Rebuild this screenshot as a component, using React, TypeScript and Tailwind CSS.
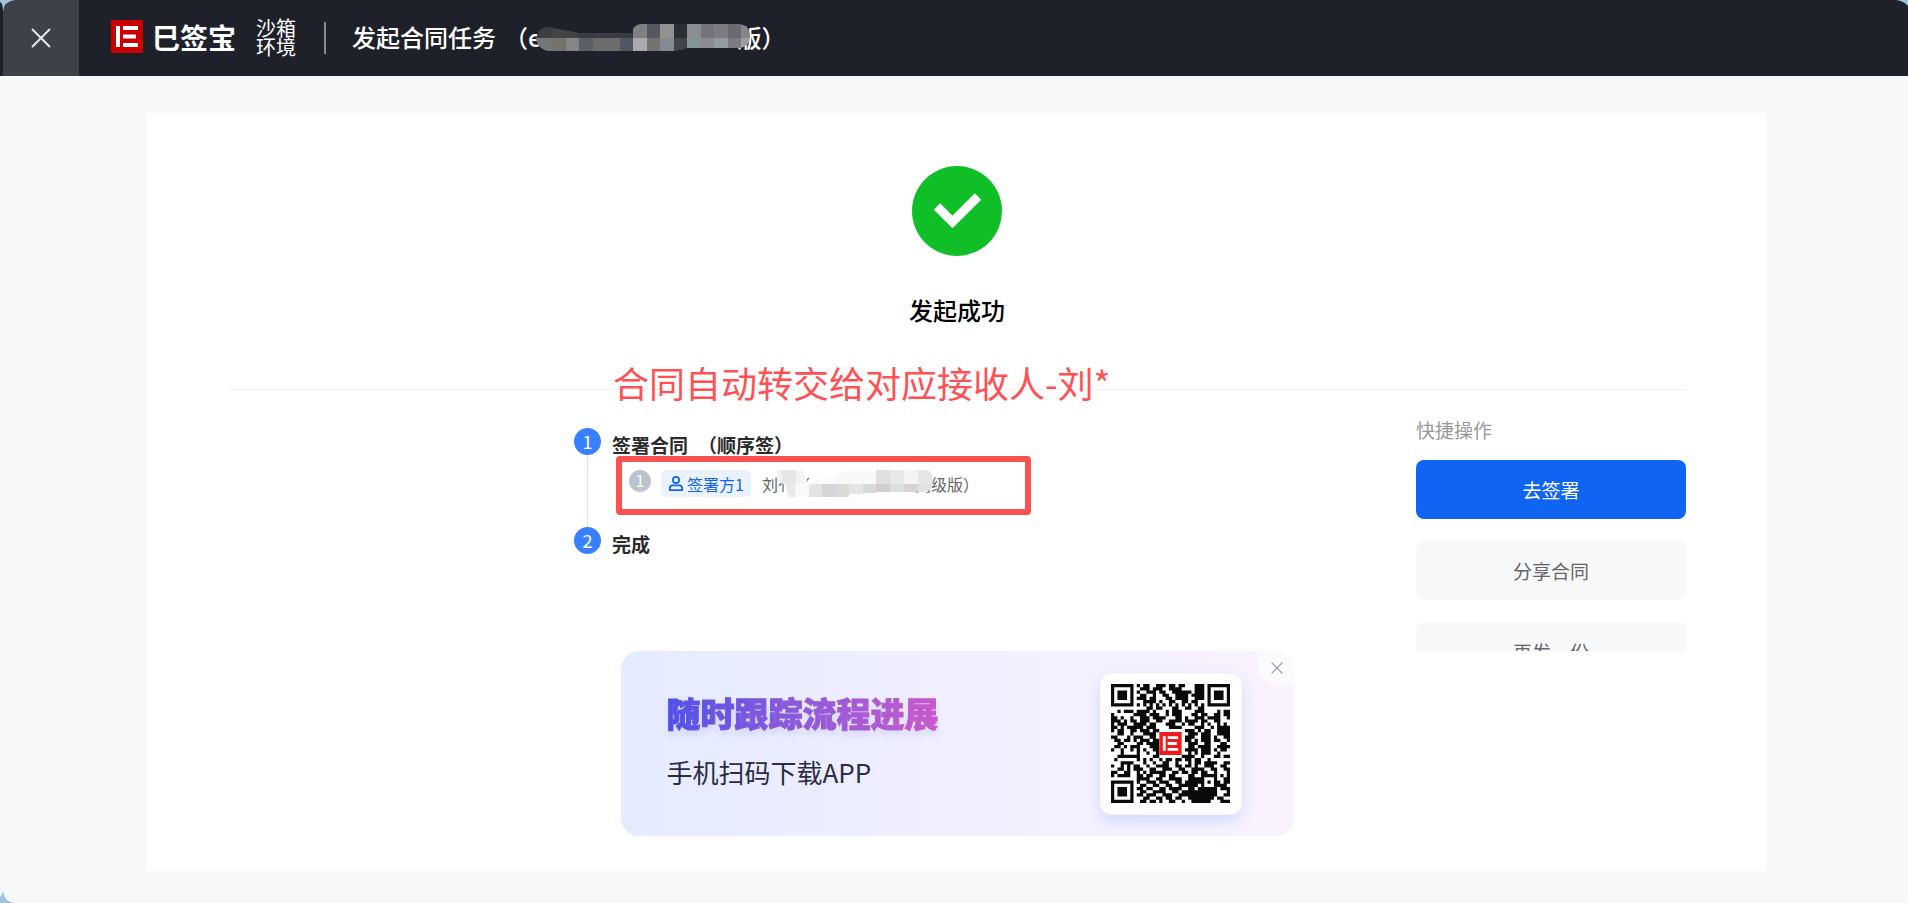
import { useState } from "react";

const QR_ROWS = [
  "#######.#.##..###.##.##...###.#######",
  "#.....#..###.###..####....###.#.....#",
  "#.###.#.#..###.##..######.###.#.###.#",
  "#.###.#..##..#..##..####.####.#.###.#",
  "#.###.#.###.##...##.####..###.#.###.#",
  "#.....#...####.#..##..##.##...#.....#",
  "#######.#.#.#.#.#.#.#.#.#.#.#.#######",
  "...........##.##...##..##..##........",
  "..#.###.####.#...#.###....###....#.##",
  "#......####.###..#.###...##.##..##.##",
  "##.#..#..###.####...##.#..###.####..#",
  "###.#.##.###..##..####.####.##..##...",
  "#.###..####.##...###..#.##..#.#..#.#.",
  "##.#.#####.###....####....###..#.####",
  "#.##..##.###.##........###.#.##..####",
  "..##..#...####..........###.###..####",
  "##...#.###..##.........###..###.#..##",
  ".##.##.#.###.##........##.#.###.##..#",
  "..##....##.####.........###..##...##.",
  ".##.#.###...###.........##.####..####",
  "#..#..#.#.#..##........####.###.#.##.",
  "...#....#..#..#.........#.#.###..#...",
  "..#######....##.......####..#...##.##",
  ".#......#.#.#..#.##.##.##.##..#......",
  "...####...#..#..##..#...#.##.####..##",
  "#..#.#.##..#..####..##.##.#..###..##.",
  "..##.#.###..##..###..##..####..##..##",
  "##..##..#.#.#####..##.##.##.##..#...#",
  "#.####..##.##..##.##....##..#####.#.#",
  "........####..##..####..#####...#..##",
  "#######.#..###.###..##.######.#.##.##",
  "#.....#..##..##..##..######.#...####.",
  "#.###.#.##.##..##.####..##.######.###",
  "#.###.#..##..####..##.###########...#",
  "#.###.#.##.###..###..############..##",
  "#.....#...##..##.##.##..########.##..",
  "#######..##.##.#..##..#..######...###",
];

const qrPath = QR_ROWS.map((row, y) =>
  row.replace(/./g, (c, x) => (c === "#" ? `M${x} ${y}h1v1h-1z` : "")),
).join("");

function BrandMark({ color, className }: { color: string; className?: string }) {
  return (
    <svg viewBox="0 0 32 33" className={className} aria-hidden="true">
      <path fill={color} d="M0 0h32v33H0z" />
      <path fill="#fff" d="M5 6h4v21H5zM12 6h15v4H12zM12 14.500h13v4H12zM12 23h15v4H12z" />
    </svg>
  );
}

function Cross({ className, width = 1 }: { className?: string; width?: number }) {
  return (
    <svg viewBox="0 0 20 20" className={className} fill="none" stroke="currentColor" strokeWidth={width} aria-hidden="true">
      <path d="M1 1l18 18M19 1L1 19" />
    </svg>
  );
}

function QrCode() {
  return (
    <div className="relative grid place-items-center">
      <svg viewBox="0 0 37 37" className="size-[119px]" role="img" aria-label="APP">
        <path d={qrPath} fill="#0a0a0a" />
      </svg>
      <BrandMark color="#ee1c1c" className="absolute size-[23px]" />
    </div>
  );
}

type Block = [x: number, y: number, w: number, h: number, fill: string];

const TITLE_BLOCKS: Block[] = [
  [0, 0, 16, 14, "#3d3f43"],
  [0, 14, 16, 13, "#737778"],
  [16, 0, 27, 14, "#414347"],
  [16, 14, 14, 13, "#76736f"],
  [30, 14, 13, 13, "#858588"],
  [43, 9, 54, 5, "#3a3c41"],
  [43, 14, 14, 13, "#5a5f69"],
  [57, 14, 27, 13, "#6d6d6c"],
  [84, 14, 13, 13, "#525763"],
  [97, 0, 14, 14, "#7e8082"],
  [111, 0, 13, 14, "#57585f"],
  [124, 0, 14, 14, "#929292"],
  [97, 14, 14, 13, "#a9aaac"],
  [111, 14, 13, 13, "#75726f"],
  [124, 14, 14, 13, "#858991"],
  [138, 0, 13, 14, "#2c2e35"],
  [138, 14, 13, 13, "#434447"],
  [151, 0, 14, 14, "#8b8d91"],
  [165, 0, 13, 14, "#747579"],
  [178, 0, 14, 14, "#7b7b81"],
  [192, 0, 13, 14, "#6a6a72"],
  [205, 0, 9, 14, "#858584"],
  [151, 14, 14, 10, "#859297"],
  [165, 14, 13, 10, "#8c8c90"],
  [178, 14, 14, 10, "#939aa0"],
  [192, 14, 13, 10, "#7d7b82"],
  [205, 14, 9, 10, "#999e9f"],
];

const SIGNER_BLOCKS: Block[] = [
  [0, 0, 5, 14, "#eef0f1"],
  [5, 0, 14, 14, "#e5e7e7"],
  [19, 0, 13, 14, "#f4f4f4"],
  [32, 7, 27, 7, "#fafafa"],
  [59, 1, 40, 13, "#f8f8f8"],
  [99, 0, 14, 14, "#e0dfde"],
  [113, 0, 14, 14, "#e8e8e9"],
  [127, 0, 14, 14, "#f3f4f5"],
  [141, 0, 15, 14, "#e4e6e6"],
  [9, 14, 9, 13, "#e8eaea"],
  [18, 14, 14, 13, "#f9f9f9"],
  [32, 14, 13, 13, "#e3e4e4"],
  [45, 14, 14, 13, "#d5d6d9"],
  [59, 14, 13, 13, "#dcdad7"],
  [72, 14, 14, 10, "#e5e5e5"],
  [86, 14, 13, 9, "#dad9d9"],
  [99, 14, 14, 8, "#d3cecd"],
  [113, 14, 14, 8, "#dedfe1"],
  [127, 14, 14, 8, "#d6d3d2"],
  [141, 14, 15, 8, "#e1e2e2"],
];

// Privacy mask: coloured blocks clipped to the brush stroke that painted them.
function Mosaic({ id, width, blocks, outline, className }: {
  id: string;
  width: number;
  blocks: Block[];
  outline: string;
  className: string;
}) {
  return (
    <svg width={width} height={27} className={className} shapeRendering="crispEdges" aria-hidden="true">
      <clipPath id={id}>
        <path d={outline} />
      </clipPath>
      <g clipPath={`url(#${id})`}>
        {blocks.map(([x, y, w, h, fill]) => (
          <rect key={`${x}-${y}`} x={x} y={y} width={w} height={h} fill={fill} />
        ))}
      </g>
    </svg>
  );
}

function Header() {
  return (
    <header className="flex h-[76px] bg-[#1e2129] pl-[3px] text-white">
      <button aria-label="关闭" className="grid h-full w-[76px] shrink-0 place-items-center rounded-tl-xl bg-[#3e4148] text-[#e8e8e8]">
        <Cross className="size-5" width={2} />
      </button>
      <div className="flex items-center pb-[3px] pl-8">
        <BrandMark color="#cc0000" className="h-[33px] w-8 shrink-0" />
        <span className="ml-[9px] whitespace-nowrap text-[28px] font-bold leading-9">巳签宝</span>
        <span className="ml-5 w-10 text-xl leading-[19px]">沙箱环境</span>
        <span className="ml-7 mt-[3px] h-8 w-0.5 bg-[#868b97]" />
        <h1 className="relative ml-[26px] flex whitespace-nowrap text-2xl font-medium">
          <span>发起合同任务</span>
          <span className="ml-2">（e</span>
          <span className="ml-[196px]">版）</span>
          <Mosaic
            id="title-mask"
            width={214}
            blocks={TITLE_BLOCKS}
            outline="M0 15Q2 3 12 3L38 8Q42 9 47 9H95Q98 0 106 0H204Q214 2 214 12T204 24H151Q145 27 137 27H12Q2 25 0 15z"
            className="absolute left-[184px] top-[3px]"
          />
        </h1>
      </div>
    </header>
  );
}

function StepDot({ n }: { n: number }) {
  return (
    <span className="grid size-[27px] shrink-0 place-items-center rounded-full bg-[#3880ff] pb-0.5 text-lg leading-none text-white">
      {n}
    </span>
  );
}

function Signer() {
  return (
    <div className="ml-1 flex h-[59px] w-[415px] items-start rounded border-[6px] border-[#fd5053] pl-[7px] pt-2">
      <span className="grid size-[22px] place-items-center rounded-full bg-[#bac4ce] pb-0.5 text-base leading-none text-white">1</span>
      <span className="ml-[10px] flex h-[27px] w-[90px] items-center gap-[3px] rounded-md bg-[#ebf2ff] pl-[7px] text-base text-[#1263ee]">
        <svg viewBox="0 0 16 17" className="h-[15px] w-4" fill="none" stroke="currentColor" strokeWidth="2" aria-hidden="true">
          <circle cx="8" cy="4.500" r="3.500" />
          <path d="M1 16v-2q0-3.500 3.500-3.500h7q3.500 0 3.500 3.500v2z" />
        </svg>
        <span className="whitespace-nowrap">签署方1</span>
      </span>
      <span className="relative ml-[11px] flex whitespace-nowrap text-base leading-7 text-[#666]">
        <span>刘亻（</span>
        <span className="ml-[105px]">高级版）</span>
        <Mosaic
          id="signer-mask"
          width={156}
          blocks={SIGNER_BLOCKS}
          outline="M0 0H25L31 13L48 7L60 7L66 1H84L90 0H150Q156 2 156 11T148 22L100 23Q84 23 78 26L70 27H12L8 16L0 10z"
          className="absolute left-[15px] top-0"
        />
      </span>
    </div>
  );
}

function Steps() {
  return (
    <ol className="relative pt-[38px]">
      <li className="flex gap-[11px]">
        <div className="flex flex-col items-center">
          <StepDot n={1} />
          <span className="w-px flex-1 bg-[#dfe1e5]" />
        </div>
        <div className="pb-3">
          <h3 className="flex h-7 items-center whitespace-nowrap pt-1.5 text-[19px] font-bold text-[#2b2b2b]">
            <span>签署合同</span>
            <span className="ml-[10px]">（顺序签）</span>
          </h3>
          <Signer />
        </div>
      </li>
      <li className="flex gap-[11px]">
        <StepDot n={2} />
        <h3 className="pt-[3px] text-[19px] font-bold leading-7 text-[#2b2b2b]">完成</h3>
      </li>
      <li className="absolute -top-[35px] left-[39px] list-none whitespace-nowrap text-4xl leading-[54px] text-[#ff5053]">
        合同自动转交给对应接收人-刘*
      </li>
    </ol>
  );
}

function QuickActions() {
  return (
    <aside className="w-[270px] pt-[26px] text-[19px]">
      <h2 className="leading-7 text-[#999]">快捷操作</h2>
      <div className="mt-4 flex flex-col gap-[22px]">
        <button className="h-[59px] rounded-lg bg-[#1064f4] pt-0.5 text-white">去签署</button>
        <button className="h-[59px] rounded-lg bg-[#f7f8fa] pt-0.5 text-[#666]">分享合同</button>
        <button className="h-[59px] rounded-lg bg-[#f7f8fa] pt-0.5 text-[#666]">再发一份</button>
      </div>
    </aside>
  );
}

function AppBanner({ onClose }: { onClose: () => void }) {
  return (
    <section className="relative mx-auto flex h-[185px] w-[673px] items-center justify-between overflow-hidden rounded-[18px] bg-linear-to-r from-[#e5ebff] via-[#f0efff] to-[#faf2fe] pl-[46px] pr-[52px]">
      <div className="pb-2">
        <p className="bg-linear-to-r from-[#5050e8] to-[#ca58cc] bg-clip-text text-[34px] font-black leading-[50px] text-transparent drop-shadow-[0_5px_3px_rgba(80,80,220,0.12)] [-webkit-text-stroke:1px_transparent]">
          随时跟踪流程进展
        </p>
        <p className="mt-3.5 text-[26px] leading-10 text-[#2a2d45]">手机扫码下载APP</p>
      </div>
      <div className="grid size-[142px] place-items-center rounded-xl border-2 border-[#fcfaff] bg-white shadow-[0_6px_14px_rgba(150,190,255,0.4)]">
        <QrCode />
      </div>
      <button
        aria-label="关闭"
        onClick={onClose}
        className="absolute right-0 top-0 grid h-[34px] w-[37px] place-items-center rounded-bl-[22px] bg-white/60 pl-1 text-[#999]"
      >
        <Cross className="size-3" width={2} />
      </button>
    </section>
  );
}

export default function App() {
  const [bannerOpen, setBannerOpen] = useState(true);

  return (
    <div className="relative min-h-screen overflow-hidden bg-[#f7f8fa] pb-8 font-['Noto_Sans_CJK_SC',sans-serif]">
      <Header />
      <main className="ml-[147px] mr-[141px] mt-[37px] bg-white px-[81px] pb-[35px] pt-[53px]">
        <div className="flex flex-col items-center border-b border-[#f0f1f3] pb-[61px]">
          <svg viewBox="0 0 90 90" className="size-[90px]" aria-hidden="true">
            <circle cx="45" cy="45" r="45" fill="#10bf27" />
            <path d="M25 40.500L40.500 56L66 30.500" fill="none" stroke="#fff" strokeWidth="9" />
          </svg>
          <h2 className="mt-9 text-2xl font-medium leading-9 text-black">发起成功</h2>
        </div>
        {/* Fixed-height list; the banner below stays put. */}
        <div className="grid h-[261px] grid-cols-[1fr_766px_1fr]">
          <div className="col-start-2">
            <Steps />
          </div>
          <div className="flex h-[261px] justify-end overflow-hidden">
            <QuickActions />
          </div>
        </div>
        {bannerOpen && <AppBanner onClose={() => setBannerOpen(false)} />}
      </main>
      {/* Desktop showing through behind the rounded window corners */}
      <svg className="absolute left-0 top-0 h-3 w-[15px]" fill="#9fc3d8" aria-hidden="true">
        <path d="M0 0H15Q4 1 3 12Q3 3 0 2z" />
      </svg>
      <svg className="absolute right-0 top-0 h-3 w-3" fill="#9fc3d8" aria-hidden="true">
        <path d="M0 0H12V6Q8 1 0 0z" />
      </svg>
      <svg className="absolute bottom-0 left-0 h-3 w-[15px]" fill="#9fc3d8" aria-hidden="true">
        <path d="M0 12V6Q2 4 3 0Q4 11 15 12z" />
      </svg>
    </div>
  );
}
